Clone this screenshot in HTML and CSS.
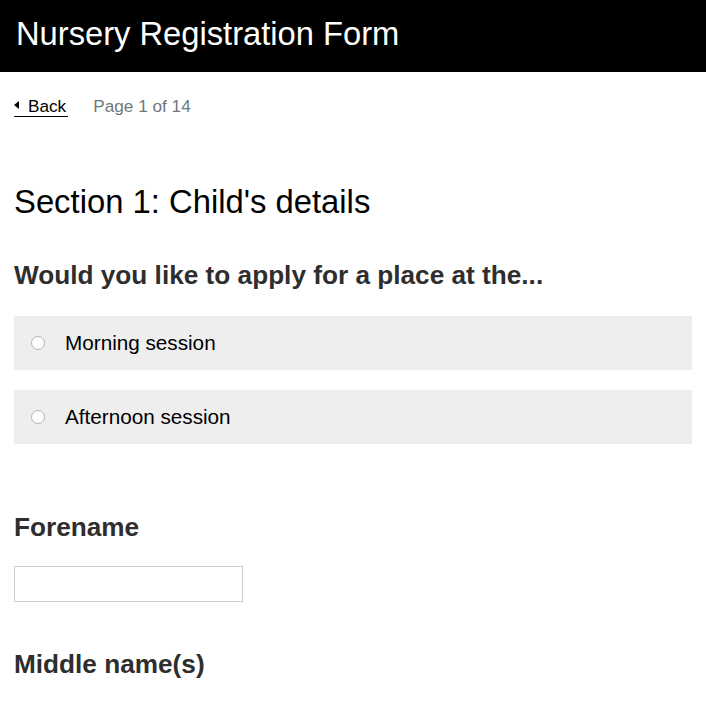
FILE: index.html
```html
<!DOCTYPE html>
<html lang="en">
<head>
<meta charset="utf-8">
<title>Nursery Registration Form</title>
<link rel="stylesheet" href="styles.css">
</head>
<body>
<header class="site-header">
  <h1 class="site-title">Nursery Registration Form</h1>
</header>
<main class="content">
  <nav class="progress-row">
    <a class="back-link" href="#"><span class="back-arrow"></span>Back</a>
    <span class="page-count">Page 1 of 14</span>
  </nav>
  <h2 class="section-title">Section 1: Child's details</h2>
  <fieldset class="question">
    <legend class="question-title">Would you like to apply for a place at the...</legend>
    <div class="options">
      <label class="option"><span class="radio"></span><span class="option-text">Morning session</span></label>
      <label class="option"><span class="radio"></span><span class="option-text">Afternoon session</span></label>
    </div>
  </fieldset>
  <div class="field field-forename">
    <label class="field-label">Forename</label>
    <div class="text-input"></div>
  </div>
  <div class="field field-middle">
    <label class="field-label">Middle name(s)</label>
  </div>
</main>
</body>
</html>
```

FILE: styles.css
```css
html, body {
  margin: 0;
  padding: 0;
  background: #ffffff;
  font-family: "Liberation Sans", Arial, sans-serif;
  color: #000;
}

.site-header {
  background: #000;
  height: 72px;
  box-sizing: border-box;
  padding: 14px 16px 0;
}

.site-title {
  margin: 0;
  font-size: 32.7px;
  line-height: 40px;
  font-weight: normal;
  color: #fff;
}

.content {
  padding: 0 14px;
}

.progress-row {
  display: flex;
  align-items: flex-start;
  gap: 25px;
  margin-top: 24px;
  font-size: 17.2px;
  line-height: 20px;
}

.back-link {
  display: inline-flex;
  align-items: center;
  color: #000;
  text-decoration: none;
  border-bottom: 1px solid #000;
  padding-right: 2px;
}

.back-arrow {
  width: 0;
  height: 0;
  border-top: 4px solid transparent;
  border-bottom: 4px solid transparent;
  border-right: 5px solid #000;
  margin-right: 9px;
  margin-top: -2px;
}

.page-count {
  color: #6f777b;
}

.section-title {
  margin: 65px 0 0;
  font-size: 32.8px;
  line-height: 40px;
  font-weight: normal;
}

.question {
  border: 0;
  margin: 37px 0 0;
  padding: 0;
  min-width: 0;
}

.question-title {
  padding: 0;
  font-size: 26.2px;
  line-height: 32px;
  font-weight: bold;
  color: #2e2e2e;
}

.options {
  display: flex;
  flex-direction: column;
  gap: 20px;
  margin-top: 25px;
}

.option {
  display: flex;
  align-items: center;
  height: 54px;
  background: #eeeeee;
  padding-left: 17px;
  font-size: 20.7px;
}

.radio {
  width: 12px;
  height: 12px;
  border: 1px solid #b5b5b5;
  border-radius: 50%;
  background: #fff;
  margin-right: 20px;
  flex: none;
}

.field-label {
  display: block;
  font-size: 26.2px;
  line-height: 32px;
  font-weight: bold;
  color: #2e2e2e;
}

.field-forename {
  margin-top: 67px;
}

.text-input {
  margin-top: 23px;
  width: 229px;
  height: 36px;
  box-sizing: border-box;
  border: 1px solid #cccccc;
  background: #fff;
}

.field-middle {
  margin-top: 46px;
}
```
